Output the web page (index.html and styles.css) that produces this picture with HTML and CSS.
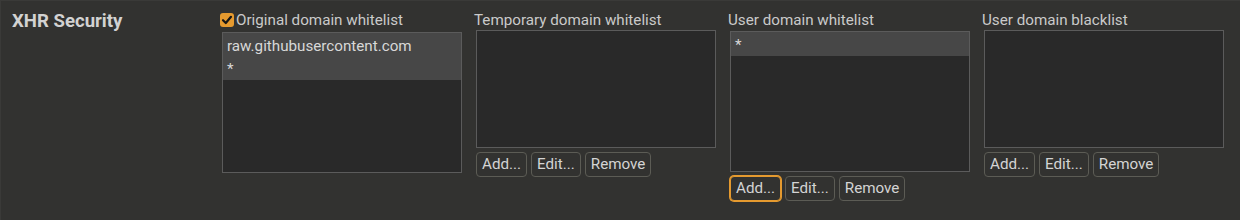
FILE: index.html
```html
<!DOCTYPE html>
<html lang="en">
<head>
    <meta charset="UTF-8">
    <meta name="viewport" content="width=device-width, initial-scale=1.0">
    <title>XHR Security</title>
    <link rel="stylesheet" href="styles.css">
</head>
<body>
    <div class="panel">
        <div class="section-title">XHR Security</div>

        <div class="list-col col-original">
            <label class="list-label">
                <span class="check">
                    <svg width="14" height="14" viewBox="0 0 14 14"><path d="M3 7.2 L5.8 10 L11 3.8" fill="none" stroke="#161616" stroke-width="2.2" stroke-linecap="round" stroke-linejoin="round"/></svg>
                </span>
                Original domain whitelist
            </label>
            <ul class="listbox tall">
                <li class="selected">raw.githubusercontent.com</li>
                <li class="selected">*</li>
            </ul>
        </div>

        <div class="list-col">
            <div class="list-label">Temporary domain whitelist</div>
            <ul class="listbox"></ul>
            <div class="buttons">
                <button>Add...</button>
                <button>Edit...</button>
                <button>Remove</button>
            </div>
        </div>

        <div class="list-col col-user">
            <div class="list-label">User domain whitelist</div>
            <ul class="listbox tall">
                <li class="selected">*</li>
            </ul>
            <div class="buttons">
                <button class="focused">Add...</button>
                <button>Edit...</button>
                <button>Remove</button>
            </div>
        </div>

        <div class="list-col">
            <div class="list-label">User domain blacklist</div>
            <ul class="listbox"></ul>
            <div class="buttons">
                <button>Add...</button>
                <button>Edit...</button>
                <button>Remove</button>
            </div>
        </div>
    </div>
</body>
</html>
```

FILE: styles.css
```css
:root {
    --bg: #323230;
    --list-bg: #292929;
    --list-border: #5b5b5b;
    --selected: #474747;
    --text: #d2d2d2;
    --accent: #e59a2f;
}

* {
    box-sizing: border-box;
}

body {
    margin: 0;
    background: var(--bg);
    font-family: Roboto, 'Liberation Sans', sans-serif;
    font-size: 15.2px;
    color: var(--text);
}

.panel {
    display: flex;
    align-items: flex-start;
    height: 220px;
    padding: 10px 0 0 11px;
    border-top: 1px solid #3a3a38;
    border-left: 1px solid #3a3a38;
}

.section-title {
    width: 208px;
    font-size: 18.6px;
    font-weight: bold;
    line-height: 21px;
}

.list-col {
    display: flex;
    flex-direction: column;
    width: 254px;
}

.list-label {
    display: flex;
    align-items: center;
    height: 18px;
    margin-bottom: 1px;
    line-height: 18px;
    color: #cacaca;
    white-space: nowrap;
}

.col-original .list-label {
    margin-bottom: 3px;
}

.col-user .list-label {
    margin-bottom: 2px;
}

.check {
    display: inline-block;
    width: 14px;
    height: 14px;
    margin-right: 2px;
    border-radius: 3px;
    background: var(--accent);
}

.check svg {
    display: block;
}

.listbox {
    list-style: none;
    margin: 0 0 0 2px;
    padding: 0;
    width: 240px;
    height: 118px;
    background: var(--list-bg);
    border: 1px solid var(--list-border);
}

.listbox.tall {
    height: 141px;
}

.listbox li {
    height: 23.5px;
    padding: 1.5px 0 0 4px;
    line-height: 22px;
    color: #d8d8d8;
}

.listbox li.selected {
    background: var(--selected);
}

.buttons {
    display: flex;
    gap: 4px;
    margin: 4px 0 0 2px;
}

button {
    height: 25px;
    padding: 0 5px;
    background: var(--bg);
    color: #d4d4d4;
    border: 1px solid #5c5c55;
    border-radius: 4px;
    font-family: Roboto, 'Liberation Sans', sans-serif;
    font-size: 15.2px;
    line-height: 23px;
}

button.focused {
    border-color: var(--accent);
    box-shadow: 0 0 0 1px var(--accent);
}
```
